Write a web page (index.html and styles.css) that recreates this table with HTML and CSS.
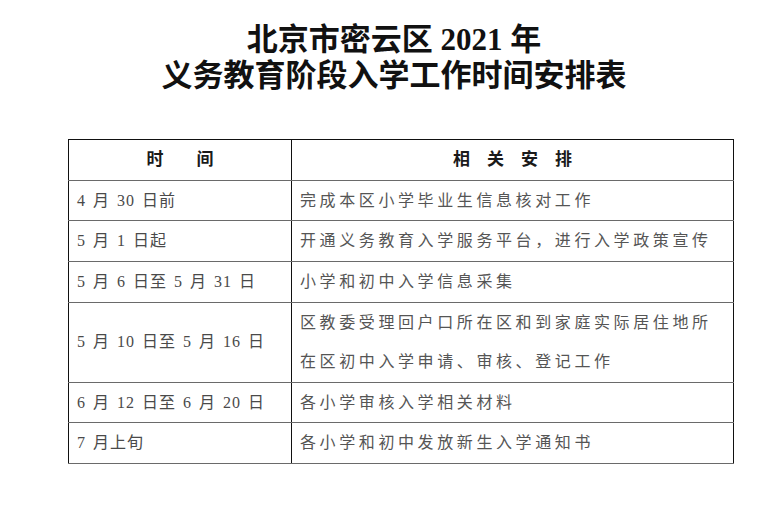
FILE: index.html
```html
<!DOCTYPE html>
<html lang="zh-CN">
<head>
<meta charset="utf-8">
<title>北京市密云区2021年义务教育阶段入学工作时间安排表</title>
<link rel="stylesheet" href="styles.css">
</head>
<body>
<div class="page">
  <h1 class="title">
    <span class="line">北京市密云区 2021 年</span>
    <span class="line">义务教育阶段入学工作时间安排表</span>
  </h1>
  <table class="schedule">
    <colgroup><col class="c1"><col class="c2"></colgroup>
    <thead>
      <tr>
        <th><span class="spread wide"><span>时</span><span>间</span></span></th>
        <th><span class="spread"><span>相</span><span>关</span><span>安</span><span>排</span></span></th>
      </tr>
    </thead>
    <tbody>
      <tr><td class="date">4 月 30 日前</td><td class="task">完成本区小学毕业生信息核对工作</td></tr>
      <tr><td class="date">5 月 1 日起</td><td class="task">开通义务教育入学服务平台，进行入学政策宣传</td></tr>
      <tr><td class="date">5 月 6 日至 5 月 31 日</td><td class="task">小学和初中入学信息采集</td></tr>
      <tr><td class="date">5 月 10 日至 5 月 16 日</td><td class="task">区教委受理回户口所在区和到家庭实际居住地所在区初中入学申请、审核、登记工作</td></tr>
      <tr><td class="date">6 月 12 日至 6 月 20 日</td><td class="task">各小学审核入学相关材料</td></tr>
      <tr><td class="date">7 月上旬</td><td class="task">各小学和初中发放新生入学通知书</td></tr>
    </tbody>
  </table>
</div>
</body>
</html>
```
FILE: styles.css
```css
html, body {
  margin: 0;
  padding: 0;
  background: #ffffff;
}
.page {
  width: 772px;
  padding-top: 22px;
  font-family: "Liberation Serif", "Noto Sans CJK SC", serif;
}
.title {
  margin: 0;
  padding-left: 16px;
  font-size: 31px;
  font-weight: 700;
  line-height: 36px;
  color: #111;
  text-align: center;
}
.title .line {
  display: block;
}
.schedule {
  margin: 45px 0 0 68px;
  width: 665px;
  border-collapse: collapse;
  table-layout: fixed;
  border-top: 1px solid #111;
  border-left: 1px solid #111;
  border-right: 1px solid #111;
  border-bottom: 1.5px solid #666;
}
.schedule .c1 { width: 223px; }
.schedule .c2 { width: 442px; }
.schedule th,
.schedule td {
  padding: 0 0 0 8px;
  border-bottom: 1.5px solid #6a6a6a;
  border-left: 1px solid #111;
  line-height: 39.6px;
  vertical-align: middle;
  text-align: left;
}
.schedule th {
  padding: 0;
  text-align: center;
  font-size: 17px;
  font-weight: 700;
  color: #1a1a1a;
  height: 39.8px;
}
.spread {
  display: inline-flex;
  gap: 17px;
}
.spread.wide {
  gap: 33px;
}
.date {
  font-size: 16px;
  color: #4a4a4a;
  letter-spacing: 1px;
  word-spacing: 2px;
}
.schedule td.task {
  padding-right: 14px;
  font-size: 16px;
  color: #555;
  letter-spacing: 3.6px;
}
```
